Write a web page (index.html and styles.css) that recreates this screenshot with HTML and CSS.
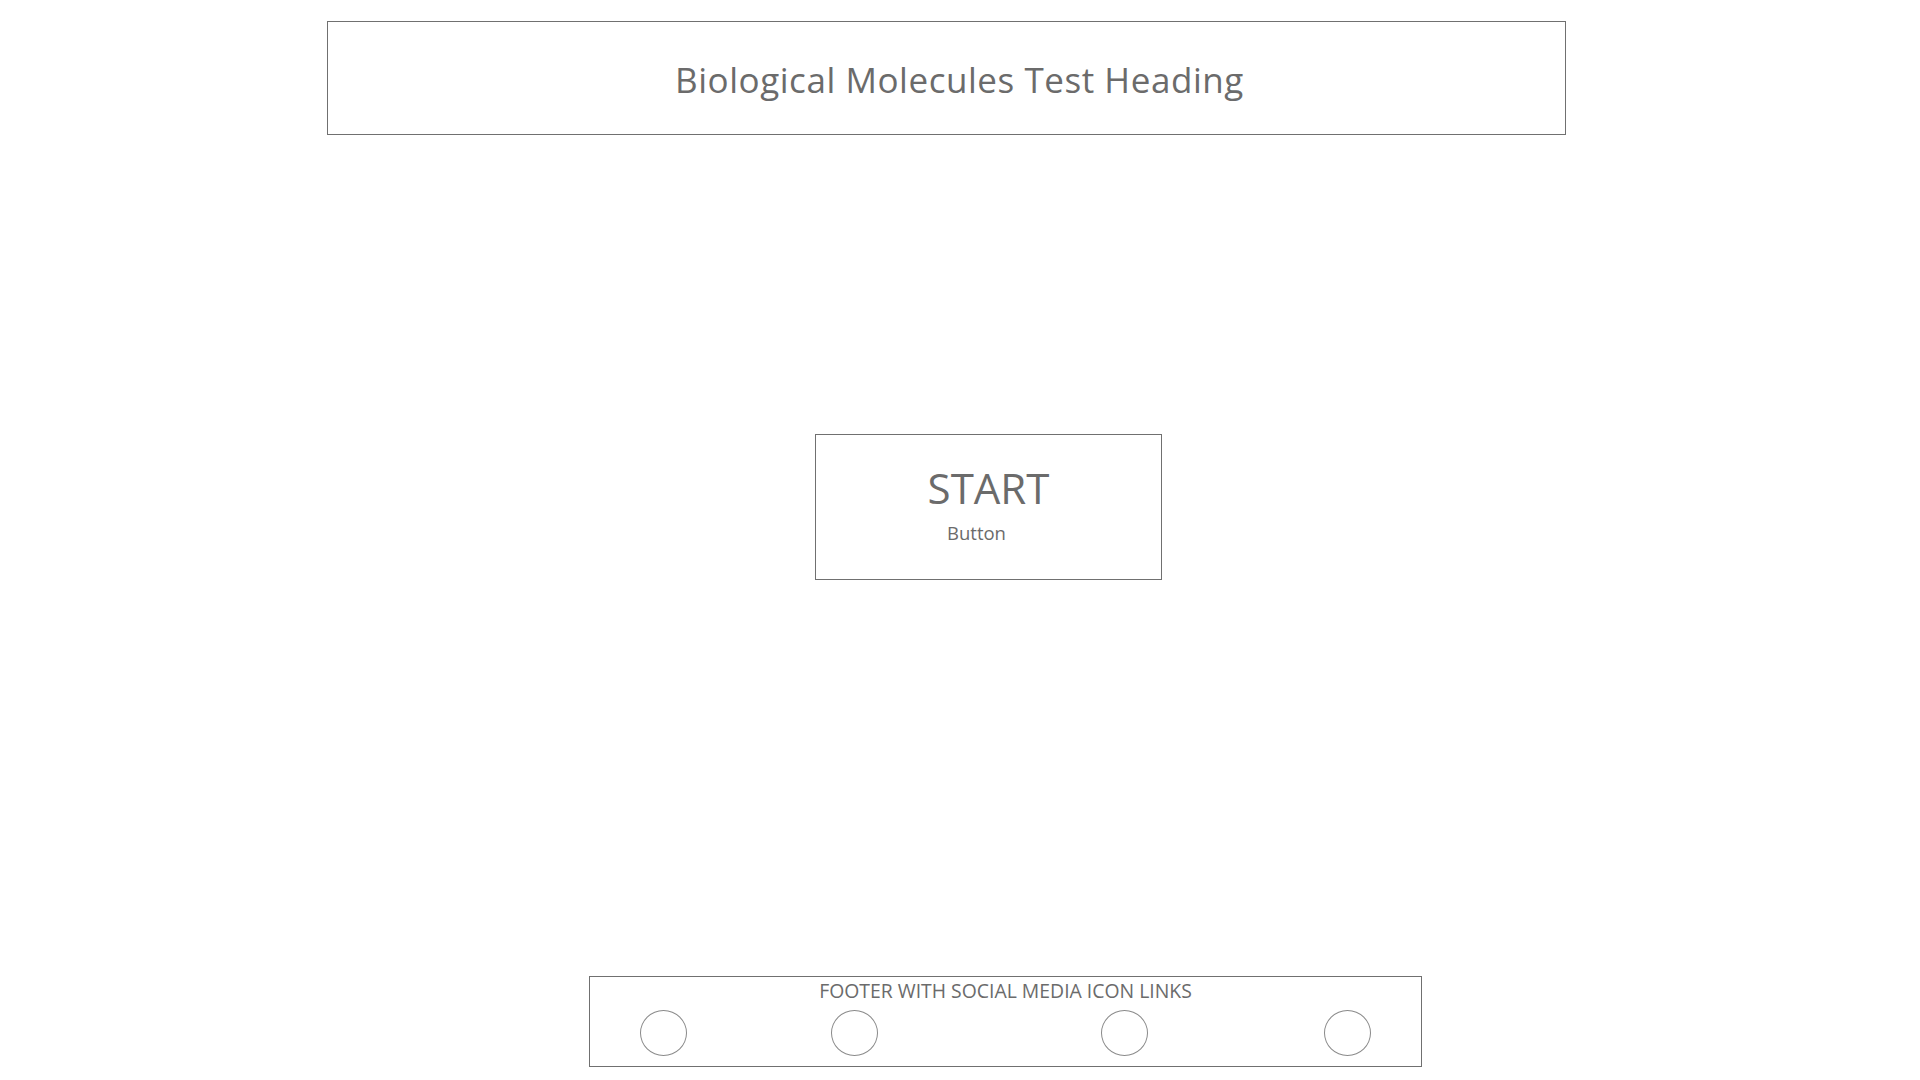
FILE: index.html
```html
<!DOCTYPE html>
<html>
<head>
<meta charset="utf-8">
<link rel="stylesheet" href="styles.css">
</head>
<body>
<header class="title-box">
  <h1 class="title">Biological Molecules Test Heading</h1>
</header>
<main class="start-box">
  <div class="start-label">START</div>
  <div class="start-sub">Button</div>
</main>
<footer class="footer-box">
  <div class="footer-label">FOOTER WITH SOCIAL MEDIA ICON LINKS</div>
  <div class="icons">
    <span class="icon icon-1"></span>
    <span class="icon icon-2"></span>
    <span class="icon icon-3"></span>
    <span class="icon icon-4"></span>
  </div>
</footer>
</body>
</html>
```
FILE: styles.css
```css
html, body {
  margin: 0;
  padding: 0;
  background: #ffffff;
}
body {
  width: 1920px;
  height: 1080px;
  display: flex;
  flex-direction: column;
  font-family: "Open Sans", "Noto Sans", sans-serif;
  color: #6b6b6b;
}
.title-box {
  box-sizing: border-box;
  margin: 21px 0 0 327px;
  width: 1239px;
  height: 114px;
  border: 1px solid #707070;
  padding: 36px 0 0 347px;
}
.title {
  margin: 0;
  font-weight: 400;
  font-size: 35px;
  letter-spacing: 0.55px;
  line-height: 44px;
  white-space: nowrap;
}
.start-box {
  box-sizing: border-box;
  margin: 299px 0 0 815px;
  width: 347px;
  height: 146px;
  border: 1px solid #707070;
  padding-top: 28px;
}
.start-label {
  text-align: center;
  font-size: 42px;
  line-height: 50px;
}
.start-sub {
  margin-top: 8px;
  padding-left: 131px;
  font-size: 18.5px;
  line-height: 24px;
}
.footer-box {
  box-sizing: border-box;
  margin: 396px 0 0 589px;
  width: 833px;
  height: 91px;
  border: 1px solid #707070;
  padding-top: 2px;
}
.footer-label {
  text-align: center;
  font-size: 19.4px;
  line-height: 24px;
}
.icons {
  display: flex;
  margin-top: 7px;
}
.icon {
  box-sizing: border-box;
  width: 47px;
  height: 46px;
  border: 1px solid #8a8a8a;
  border-radius: 50%;
}
.icon-1 { margin-left: 50px; }
.icon-2 { margin-left: 144px; }
.icon-3 { margin-left: 223px; }
.icon-4 { margin-left: 176px; }
```
